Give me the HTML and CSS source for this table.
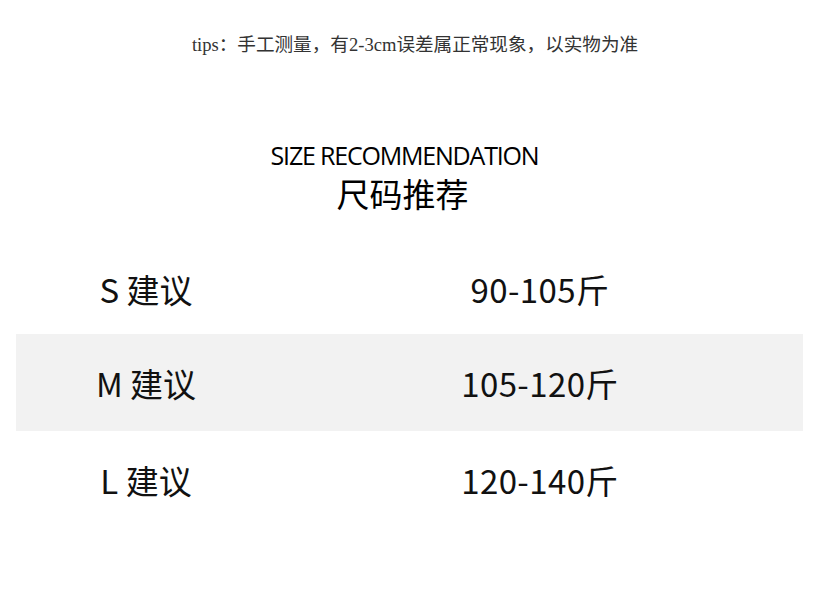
FILE: index.html
```html
<!DOCTYPE html>
<html lang="zh">
<head>
<meta charset="utf-8">
<link rel="stylesheet" href="styles.css">
</head>
<body>
<div class="page">
  <p class="tips">tips：手工测量，有2-3cm误差属正常现象，以实物为准</p>
  <div class="heading">
    <div class="title-en">SIZE RECOMMENDATION</div>
    <div class="title-cn">尺码推荐</div>
  </div>
  <div class="table">
    <div class="row first"><span class="size">S 建议</span><span class="weight">90-105斤</span></div>
    <div class="row shaded"><span class="size">M 建议</span><span class="weight">105-120斤</span></div>
    <div class="row"><span class="size">L 建议</span><span class="weight">120-140斤</span></div>
  </div>
</div>
</body>
</html>
```

FILE: styles.css
```css
html, body {
  margin: 0;
  padding: 0;
  background: #ffffff;
}
.page {
  width: 815px;
  height: 597px;
  overflow: hidden;
  color: #111;
}
.tips {
  margin: 0;
  padding-top: 33px;
  padding-left: 15px;
  text-align: center;
  font-family: "Liberation Serif", "Noto Sans CJK SC", serif;
  font-size: 18.6px;
  line-height: 24px;
  color: #333;
}
.heading {
  margin-top: 83px;
  text-align: center;
  font-family: "Open Sans", "Noto Sans CJK SC", sans-serif;
  color: #000;
}
.title-en {
  font-size: 25px;
  line-height: 30px;
  letter-spacing: -1.2px;
  padding-right: 6px;
}
.title-cn {
  margin-top: 3px;
  padding-right: 10px;
  font-family: "Noto Sans CJK SC", sans-serif;
  font-size: 33px;
  line-height: 40px;
  font-weight: 400;
}
.table {
  margin-top: 24px;
  padding: 0 12px 0 16px;
}
.row {
  box-sizing: border-box;
  display: grid;
  grid-template-columns: 260px 528px;
  height: 97px;
  align-items: center;
  font-family: "Noto Sans CJK SC", sans-serif;
  font-size: 33px;
  color: #111;
}
.row.first {
  padding-top: 7px;
}
.row.shaded {
  background: #f2f2f2;
}
.size {
  text-align: center;
}
.weight {
  text-align: center;
  letter-spacing: 0.4px;
}
```
